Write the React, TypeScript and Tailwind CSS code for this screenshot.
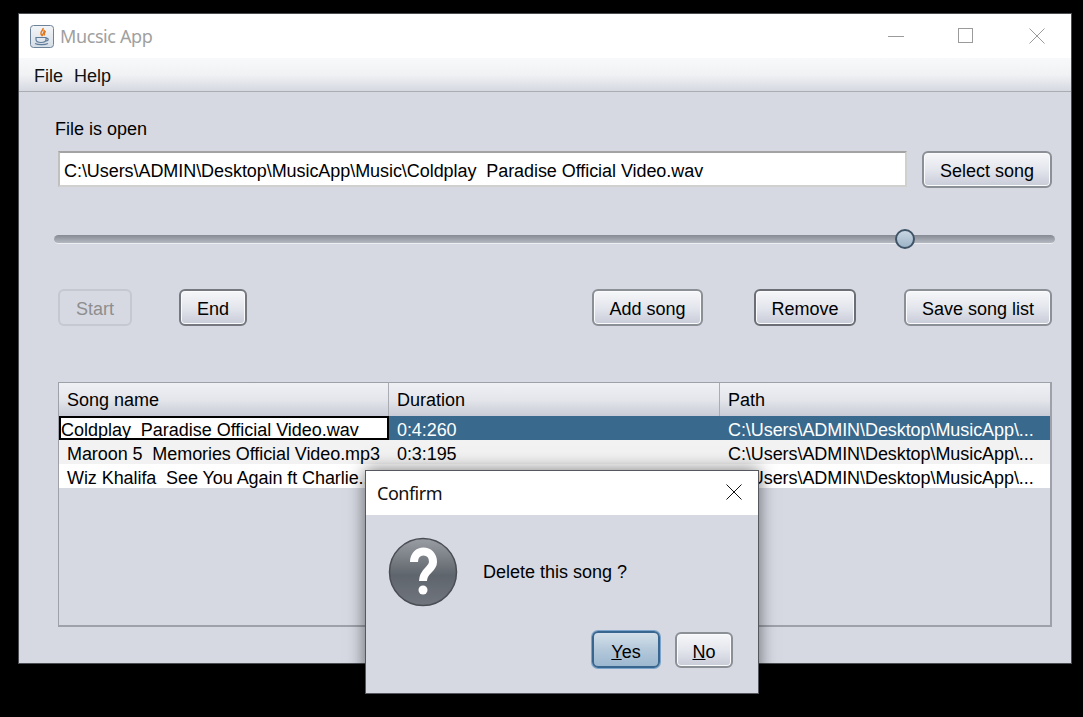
import React from "react";

const btn =
  "flex items-center justify-center rounded-[6px] border-2 bg-gradient-to-b from-[#f6f7f9] via-[#e4e6ed] to-[#c8ccd8] pt-[3px] text-[18px] leading-none text-black shadow-[inset_0_0_0_1px_#fbfbfd]";

function Btn({ label, className }: { label: string; className: string }) {
  return <div className={`${btn} ${className}`}>{label}</div>;
}

function HeaderCell({ label, className }: { label: string; className: string }) {
  return (
    <div className={`flex h-full items-center pl-[8px] pt-[1px] ${className}`}>{label}</div>
  );
}

function Row({ a, b, c, className, aClass }: { a: string; b: string; c: string; className: string; aClass?: string }) {
  return (
    <div className={`flex h-[24px] items-center whitespace-pre text-[18px] leading-none tracking-[-0.07px] ${className}`}>
      <div className={`h-full w-[330px] overflow-hidden pl-[8px] pt-[5px] ${aClass ?? ""}`}>{a}</div>
      <div className="h-full w-[331px] pl-[8px] pt-[5px]">{b}</div>
      <div className="h-full w-[330px] pl-[8px] pt-[5px]">{c}</div>
    </div>
  );
}

export default function App() {
  const path = "C:\\Users\\ADMIN\\Desktop\\MusicApp\\...";
  return (
    <div className="relative h-[717px] w-[1083px] overflow-hidden bg-black pl-[18px] pt-[13px] font-['Liberation_Sans',sans-serif] text-black">
      <div className="flex h-[651px] w-[1054px] flex-col border border-[#4a4d52] bg-[#d6d9e2]">
        {/* title bar */}
        <div className="flex h-[44px] shrink-0 items-center bg-white pl-[11px]">
          <svg width="25" height="24" viewBox="0 0 25 24" className="mt-[2px]">
            <defs>
              <linearGradient id="j" x1="0" y1="0" x2="0" y2="1">
                <stop offset="0" stopColor="#f4f6f8" />
                <stop offset="1" stopColor="#d5dde6" />
              </linearGradient>
            </defs>
            <rect x="0.5" y="0.5" width="23" height="22" rx="3" fill="url(#j)" stroke="#6d8399" />
            <path d="M13 3c1 2-3 3-2 6 .3 1 1 1.500 1.500 2-1-2 3-3 1.500-6M15.500 6c-1 1.500-2 2.500-1 4.500" fill="none" stroke="#e2761b" strokeWidth="1.500" />
            <path d="M6 12.500h10v2c0 2-2 3-5 3s-5-1-5-3zM16 13c3 0 3 3-.5 3M5 18.500c3 1.500 10 1.500 13 0" fill="none" stroke="#5f7c9a" strokeWidth="1.200" />
          </svg>
          <span className="ml-[5px] font-['Noto_Sans',sans-serif] text-[18px] tracking-[-0.4px] text-[#a0a0a0]">Mucsic App</span>
          <div className="ml-auto flex items-center">
            <svg width="16" height="16" viewBox="0 0 16 16" className="mr-[54px]"><path d="M0 8.500h16" stroke="#9b9b9b" /></svg>
            <svg width="16" height="16" viewBox="0 0 16 16" className="mr-[55px]"><rect x="0.500" y="0.500" width="14" height="14" fill="none" stroke="#9b9b9b" /></svg>
            <svg width="16" height="16" viewBox="0 0 16 16" className="mr-[26px]"><path d="M0.500 0.500l15 15M15.500 0.500l-15 15" stroke="#9b9b9b" /></svg>
          </div>
        </div>
        {/* menu */}
        <div className="flex h-[34px] shrink-0 items-center gap-[11px] border-b border-[#a9acb0] bg-gradient-to-b from-[#f8f9fa] via-[#f1f2f4] to-[#d6d9e2] pl-[15px] pt-[3px] text-[18px] text-[#111]">
          <span>File</span>
          <span>Help</span>
        </div>
        {/* content */}
        <div className="flex flex-col">
          <div className="ml-[36px] mt-[27px] text-[18px] leading-[21px]">File is open</div>
          <div className="ml-[39px] mt-[11px] flex items-start">
            <div className="flex h-[36px] w-[849px] items-center border-2 border-[#d0d0ce] border-t-[#a3a3a3] border-l-[#c0c0c0] bg-white pl-[4px] pt-[4px] text-[18px] leading-none tracking-[-0.06px]">
              C:\Users\ADMIN\Desktop\MusicApp\Music\Coldplay&nbsp; Paradise Official Video.wav
            </div>
            <Btn label="Select song" className="ml-[15px] h-[37px] w-[130px] border-[#8b8f96]" />
          </div>
          {/* slider */}
          <div className="relative ml-[35px] mt-[47px] h-[9px] w-[1001px] rounded-full border-b border-[#eceef2] bg-gradient-to-b from-[#868a93] to-[#b5b9c2]">
            <div className="absolute left-[841px] top-[-6px] h-[20px] w-[20px] rounded-full border-2 border-[#3f5367] bg-gradient-to-b from-[#c9d6e2] to-[#9db4c8]" />
          </div>
          {/* buttons */}
          <div className="ml-[39px] mt-[45px] flex items-start">
            <div className="flex h-[37px] w-[74px] items-center justify-center rounded-[6px] border-2 border-[#c5c8d0] bg-[#d6d9e2] pt-[3px] text-[18px] leading-none text-[#8e8e8e]">Start</div>
            <Btn label="End" className="ml-[47px] h-[37px] w-[68px] border-[#75797f]" />
            <Btn label="Add song" className="ml-[345px] h-[37px] w-[111px] border-[#8b8f96]" />
            <Btn label="Remove" className="ml-[51px] h-[37px] w-[102px] border-[#6b6f75]" />
            <Btn label="Save song list" className="ml-[48px] h-[37px] w-[148px] border-[#8b8f96]" />
          </div>
          {/* table */}
          <div className="ml-[39px] mt-[56px] h-[245px] w-[994px] border border-r-2 border-b-2 border-[#9ea1a9]">
            <div className="flex h-[33px] bg-gradient-to-b from-[#eff0f4] via-[#e4e6ec] to-[#c9ccd6] text-[18px] leading-none">
              <HeaderCell label="Song name" className="w-[330px] border-r border-[#a9acb3]" />
              <HeaderCell label="Duration" className="w-[331px] border-r border-[#a9acb3]" />
              <HeaderCell label="Path" className="w-[330px]" />
            </div>
            <Row
              a="Coldplay  Paradise Official Video.wav"
              b="0:4:260"
              c={path}
              className="bg-[#39698c] text-white"
              aClass="border-2 border-black bg-white !pl-[0px] !pt-[3px] tracking-[-0.02px] text-black"
            />
            <Row a="Maroon 5  Memories Official Video.mp3" b="0:3:195" c={path} className="bg-[#f2f2f2]" />
            <Row a="Wiz Khalifa  See You Again ft Charlie..." b="" c={path} className="bg-white" />
          </div>
        </div>
      </div>

      {/* dialog */}
      <div className="absolute left-[365px] top-[470px] flex h-[224px] w-[394px] flex-col border border-[#55585e] bg-[#d6d9e2] shadow-[0_0_16px_rgba(0,0,0,0.55)]">
        <div className="flex h-[44px] shrink-0 items-center bg-white pl-[11px] font-['Noto_Sans',sans-serif] text-[18px] tracking-[-0.5px] text-[#111]">
          Confirm
          <svg width="16" height="16" viewBox="0 0 16 16" className="ml-auto mr-[16px] mt-[-2px]"><path d="M0.500 0.500l15 15M15.500 0.500l-15 15" stroke="#111" /></svg>
        </div>
        <div className="flex items-center pl-[22px] pt-[22px]">
          <svg width="70" height="70" viewBox="0 0 70 70">
            <defs>
              <linearGradient id="q" x1="0" y1="0" x2="0" y2="1">
                <stop offset="0" stopColor="#9a9ea4" />
                <stop offset="0.55" stopColor="#5f656c" />
                <stop offset="1" stopColor="#71767e" />
              </linearGradient>
            </defs>
            <circle cx="35" cy="35" r="33.500" fill="url(#q)" stroke="#4a4e54" strokeWidth="1.500" />
            <path d="M26 25C26 11 45 11 45 25C45 33 35 33 35 44" fill="none" stroke="#fff" strokeWidth="8" />
            <circle cx="35" cy="53" r="4.500" fill="#fff" />
          </svg>
          <div className="ml-[25px] text-[18px] leading-none">Delete this song ?</div>
        </div>
        <div className="ml-auto mt-[24px] flex items-start pr-[25px]">
          <div className="flex h-[37px] w-[68px] items-center justify-center rounded-[6px] border-2 border-[#39668f] bg-gradient-to-b from-[#d4e0ea] via-[#b4c8da] to-[#9cb8d0] pt-[4px] text-[18px] leading-none shadow-[0_0_0_1px_#7ba4cc]">
            <span><span className="underline">Y</span>es</span>
          </div>
          <div className={`${btn} ml-[15px] mt-[1px] h-[36px] w-[58px] border-[#8b8f96] !pt-[4px]`}>
            <span><span className="underline">N</span>o</span>
          </div>
        </div>
      </div>
    </div>
  );
}
